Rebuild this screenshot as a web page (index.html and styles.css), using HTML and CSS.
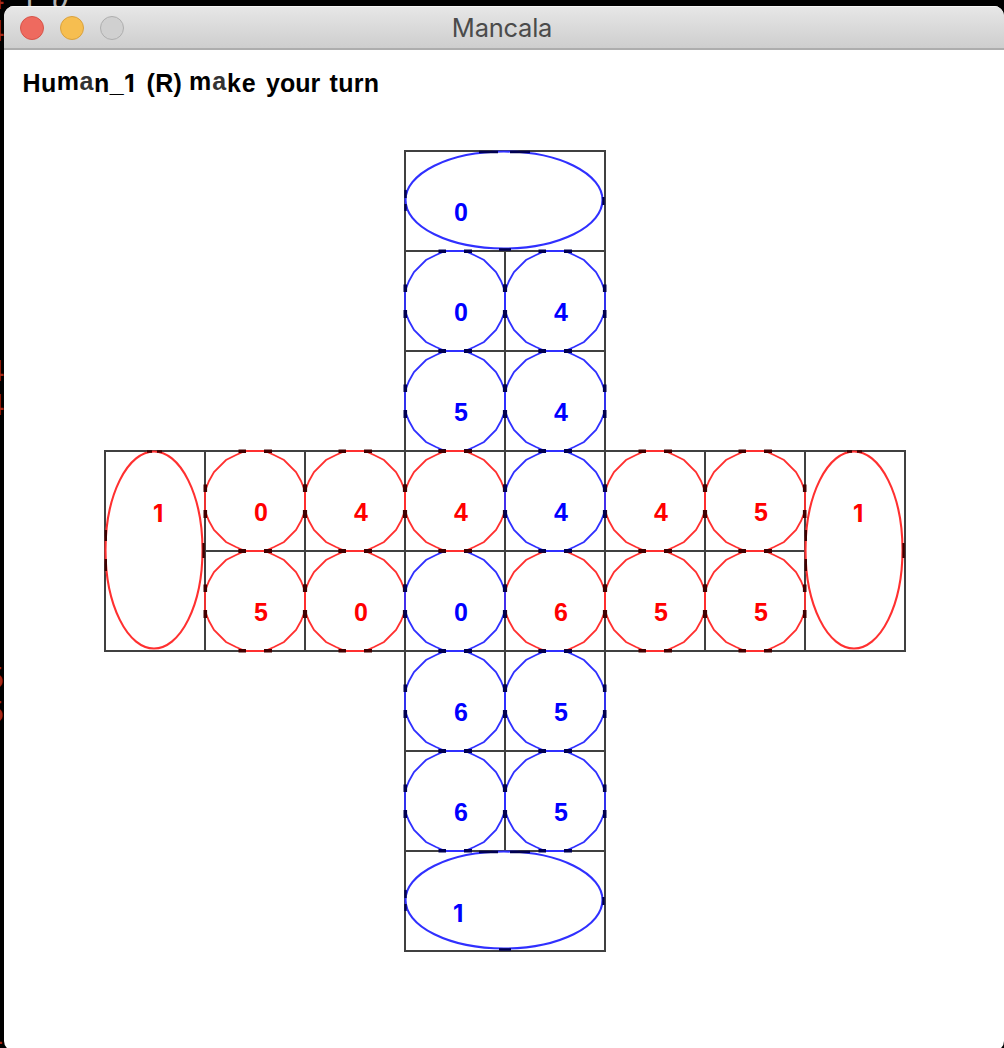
FILE: index.html
```html
<!DOCTYPE html>
<html lang="en">
<head>
<meta charset="utf-8">
<title>Mancala</title>
<link rel="stylesheet" href="styles.css">
</head>
<body>
<div class="terminal" aria-hidden="true">
  <span class="out line-a">4</span><span class="out line-b">4</span>
  <span class="out grey one line-a">1</span><span class="out grey zero line-a">0</span>
  <span class="out line-c">4</span><span class="out line-d">4</span>
  <span class="out line-e">5</span><span class="out line-f">5</span>
  <span class="out line-g">4</span>
</div>
<svg class="defs" width="0" height="0">
  <defs>
    <g id="pit">
      <polygon points="40,0 60,0 69,4 79,9 91,21 96,30 100,40 100,60 96,70 91,79 79,91 69,96 60,100 40,100 31,96 21,91 9,79 4,70 0,60 0,40 4,30 9,21 21,9 31,4"/>
      <path class="joint" d="M33.5 .3H41M59 .3H67M33.5 99.7H41M59 99.7H67M.3 33.5V41M.3 59V67M99.7 33.5V41M99.7 59V67"/>
    </g>
    <g id="wide">
      <ellipse cx="99" cy="49" rx="98.5" ry="48.5"/>
      <path class="joint thin" d="M74 1H93M105 1H125M94 98.5H106M.5 39V47M.5 53V60M198.5 46V54"/>
    </g>
    <g id="tall">
      <ellipse cx="49" cy="99" rx="48.5" ry="98.5"/>
      <path class="joint thin" d="M42 .5H47M52 .5H57M.8 79V90M.8 108V120M98.6 92V107"/>
    </g>
  </defs>
</svg>
<main class="window">
  <header class="titlebar">
    <div class="lights"><i class="light close"></i><i class="light minimize"></i><i class="light zoom"></i></div>
    <h1 class="title">Mancala</h1>
  </header>
  <p class="message"><span class="word w1">Hu<span class="up">m</span><span class="up light-a">a</span>n_<span class="one-glyph">1</span></span><span class="word w2">(R)</span><span class="word w3"><span class="up">m</span><span class="up light-a">a</span>ke</span><span class="word w4">your</span><span class="word w5">turn</span></p>
  <section class="board">
    <div class="cell blue start store-wide"><svg><use href="#wide"/></svg><b>0</b></div>
    <div class="cell blue start"><svg><use href="#pit"/></svg><b>0</b></div>
    <div class="cell blue"><svg><use href="#pit"/></svg><b>4</b></div>
    <div class="cell blue start"><svg><use href="#pit"/></svg><b>5</b></div>
    <div class="cell blue"><svg><use href="#pit"/></svg><b>4</b></div>
    <div class="cell red first store-tall"><svg><use href="#tall"/></svg><b class="one-glyph">1</b></div>
    <div class="cell red"><svg><use href="#pit"/></svg><b>0</b></div>
    <div class="cell red"><svg><use href="#pit"/></svg><b>4</b></div>
    <div class="cell red raise-2"><svg><use href="#pit"/></svg><b>4</b></div>
    <div class="cell blue raise-3"><svg><use href="#pit"/></svg><b>4</b></div>
    <div class="cell red"><svg><use href="#pit"/></svg><b>4</b></div>
    <div class="cell red"><svg><use href="#pit"/></svg><b>5</b></div>
    <div class="cell red store-tall"><svg><use href="#tall"/></svg><b class="one-glyph">1</b></div>
    <div class="cell red"><svg><use href="#pit"/></svg><b>5</b></div>
    <div class="cell red"><svg><use href="#pit"/></svg><b>0</b></div>
    <div class="cell blue raise-1"><svg><use href="#pit"/></svg><b>0</b></div>
    <div class="cell red"><svg><use href="#pit"/></svg><b>6</b></div>
    <div class="cell red"><svg><use href="#pit"/></svg><b>5</b></div>
    <div class="cell red"><svg><use href="#pit"/></svg><b>5</b></div>
    <div class="cell blue start"><svg><use href="#pit"/></svg><b>6</b></div>
    <div class="cell blue"><svg><use href="#pit"/></svg><b>5</b></div>
    <div class="cell blue start"><svg><use href="#pit"/></svg><b>6</b></div>
    <div class="cell blue"><svg><use href="#pit"/></svg><b>5</b></div>
    <div class="cell blue start store-wide"><svg><use href="#wide"/></svg><b class="one-glyph">1</b></div>
  </section>
</main>
</body>
</html>
```
FILE: styles.css
```css
* { box-sizing: border-box; }
html, body { margin: 0; height: 1048px; overflow: hidden; background: #000; }
body { padding: 6px 0 0 4px; }
.defs { position: absolute; }

/* terminal output showing behind the window */
.terminal { position: absolute; inset: 0; overflow: hidden; }
.out {
  position: absolute; left: -12.5px;
  font: 28.5px/34px "DejaVu Sans Mono", monospace; color: #a52a1a;
}
.grey { color: #b4b4b4; }
.one { left: 20px; }
.zero { left: 52px; font-style: italic; }
.line-a { top: -17px; }
.line-b { top: 15px; }
.line-c { top: 355px; }
.line-d { top: 389px; }
.line-e { top: 662px; }
.line-f { top: 696px; }
.line-g { top: 1023px; left: -14px; }

.window {
  position: relative; width: 1000px; height: 1045px;
  background: #fff; border-radius: 10px; overflow: hidden;
}
.titlebar {
  height: 44px; display: grid; grid-template-columns: 1fr auto 1fr; align-items: center;
  background: linear-gradient(#e7e7e7, #cecece);
  border-bottom: 2px solid #adadad; box-shadow: inset 0 1px #f6f6f6;
}
.lights { display: flex; gap: 16px; padding: 1px 0 0 16px; }
.light { width: 24px; height: 24px; border-radius: 50%; border: 1px solid; }
.close { background: #ee6a5f; border-color: #d65449; }
.minimize { background: #f6be50; border-color: #d9a13e; }
.zoom { background: #d0d0d0; border-color: #aeaeae; }
.title {
  margin: 0; padding: 2px 4px 0 0;
  font: 400 25.5px/40px Inter, sans-serif; color: #4b4b4b; letter-spacing: -0.25px;
}

.message {
  margin: 0; height: 101px; padding: 19px 0 0 18.5px; display: flex;
  font: bold 25px/28px "Liberation Sans", Arial, sans-serif; color: #000; white-space: nowrap;
}
.w1 { width: 124px; letter-spacing: 0.5px; }
.w2 { width: 42.5px; letter-spacing: 0.3px; }
.w3 { width: 77px; letter-spacing: 0.9px; }
.w4 { width: 63.5px; }
.w5 { letter-spacing: 0.3px; }
.up { position: relative; top: -2px; }
.light-a { color: #333; }

.board {
  width: 800px; margin-left: 101px;
  display: grid; grid-template: repeat(8, 100px) / repeat(8, 100px);
}
.cell { display: grid; box-shadow: 0 0 0 1px #404040, inset 0 0 0 1px #404040; }
.cell > * { grid-area: 1 / 1; position: relative; z-index: 1; }
.start { grid-column-start: 4; }
.first { grid-column-start: 1; }
.store-wide { grid-column-end: span 2; }
.store-tall { grid-row-end: span 2; }
.raise-1 > * { z-index: 2; }
.raise-2 > * { z-index: 3; }
.raise-3 > * { z-index: 4; }
.blue { color: #00f; --line: #3030ff; --joint: #000050; }
.red { color: #f00; --line: #ff3030; --joint: #400000; }
.cell svg { width: 100%; height: 100%; overflow: visible; fill: none; stroke: var(--line); stroke-width: 1.8; }
ellipse { stroke-width: 2.1; }
.joint { stroke: var(--joint); stroke-width: 3.6; }
.joint.thin { stroke-width: 2.4; }
.cell b { padding: 47px 0 0 49px; font: bold 25px/28px "Liberation Sans", Arial, sans-serif; }
.one-glyph { font-family: Inter, sans-serif; font-size: 24px; line-height: 28px; }
.cell b.one-glyph { padding: 49px 0 0 48px; font-family: Inter, sans-serif; font-size: 24px; }
```
